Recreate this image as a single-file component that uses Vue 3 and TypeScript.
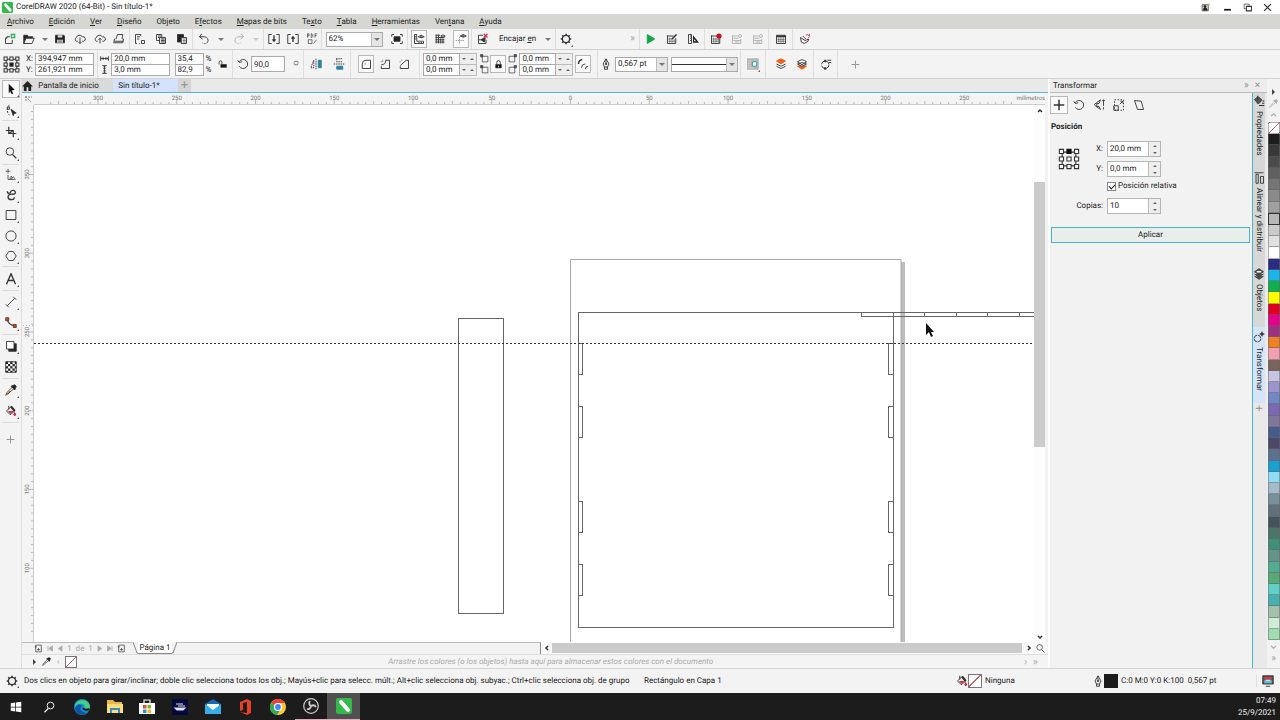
<script setup lang="ts">
import { ref } from 'vue'

interface Tool { name: string; icon: string; on?: boolean; flyout?: boolean; caret?: boolean; dim?: boolean }

const icons: Record<string, string> = {
  newDoc: '<path d="M8 5H4L2 7v7h9V9M4 5v2H2"/><path d="M9 1h6v6H9z" fill="#16a34a" stroke="none"/><path d="M12 2v4M10 4h4" stroke="#fff"/>',
  open: '<path d="M1 3h5l1 2h6v2H4l-3 7z" fill="#222"/><path d="M4 7h11l-3 7H1z" fill="#f3f3f3"/>',
  save: '<path d="M2 3h11l1 1v9H2z" fill="#222"/><path d="M5 3h6v3H5zM4 9h8v4H4z" fill="#ddd" stroke="none"/><path d="M5 10.500h6M5 12h6" stroke-width=".7"/>',
  cloudDown: '<path d="M5 11H3a3 3 0 0 1 0-5 4.500 4.500 0 0 1 8-1 3 3 0 0 1 2 6h-2M8 6v8M6 12l2 2 2-2"/>',
  cloudUp: '<path d="M5 11H3a3 3 0 0 1 0-5 4.500 4.500 0 0 1 8-1 3 3 0 0 1 2 6h-2M8 14V7M6 9l2-2 2 2"/>',
  print: '<path d="M4 8 6 2h7l-1 6M3 8h-1l-1 5h12l1-5h-1M2 11h12"/>',
  cut: '<path d="M2 14V2h7v2M4 5h4M2 14h2M4 8h3M10 10h4v4h-4zM7 14h1"/>',
  copy: '<path d="M2 2h7v8H2zM4 4h4M4 6h2"/><path d="M6 6h8v8H6z" fill="#e5e5e5"/><path d="M8 8h5M8 10h5M8 12h5"/>',
  paste: '<path d="M2 2h8v10H2z" fill="#222"/><path d="M7 6h7v8H7z" fill="#eee"/><path d="M9 8h4M9 10h4M9 12h4" stroke-width=".8"/>',
  undo: '<path d="M5 1 2 5l4 3M2 5h7a5 5 0 0 1 4 7"/><path d="M13 12q-3 4-7 1" stroke-dasharray="2 1.500"/>',
  redo: '<path d="m11 1 3 4-4 3M14 5H7a5 5 0 0 0-4 7"/><path d="M3 12q3 4 7 1" stroke-dasharray="2 1.500"/>',
  import: '<path d="M5 2H1v12h4M11 2h4v12h-4"/><path d="M8 3v8M6 8.500 8 11l2-2.500" stroke-width="1.800"/>',
  export: '<path d="M5 2H1v12h4M11 2h4v12h-4"/><path d="M8 12V5M6 7.500 8 5l2 2.500" stroke-width="1.800"/>',
  pdf: '<path d="M2 6V1h2v3H2M7 1v5h1l1-1V2L8 1H7M12 6V1h3M12 3.500h2M3 9v5h5V9zM10 14l4-5" stroke-width=".9"/>',
  full: '<path d="M4 5h8v6H4z" fill="#222"/><path d="M1 5V2h3M12 2h3v3M15 11v3h-3M4 14H1v-3"/>',
  rulers: '<path d="M2 2v12h12v-3H5V2zM2 5h2M2 8h2M8 12v2M11 12v2"/><path d="M7 5q4-4 8 0-4 3-8 0"/><circle cx="11" cy="5" r="1"/>',
  grid: '<path d="M2 3h6M2 6h12M2 9h12M2 12h12M3 2v12M6 2v12M9 7v7M12 7v7"/><path d="M9 4q3-3 6 0-3 3-6 0"/>',
  guides: '<path d="M1 10h12M6 5v10" stroke="#999" stroke-dasharray="2 1"/><path d="M7 4q4-4 8 0-4 3-8 0"/><circle cx="11" cy="4" r="1"/>',
  snapOff: '<path d="M8 3H2v11h10V9"/><path d="M11 6 5 9l5 3zM2 9h3" fill="#333"/><path d="m9 1 5 5M14 1 9 6" stroke="#dc2445" stroke-width="1.500"/>',
  gear: '<circle cx="8" cy="8" r="4.800" stroke-width="1.700"/><path d="M8 1v2.500M8 12.500V15M1 8h2.500M12.500 8H15M3 3l2 2M11 11l2 2M13 3l-2 2M3 13l2-2" stroke-width="2"/>',
  play: '<path d="m3 2 10 6-10 6z" fill="#16a34a" stroke="#16a34a"/>',
  script: '<path d="M2 4h8M2 3v11h11V7"/><path d="M5 6v7M8 7v6M11 8v5M3 8h5M3 11h9" stroke-width=".7"/><path d="m8 8 6-6" stroke-width="2.200"/>',
  ruler3: '<path d="M2 2h4v12H2zM4 4h2M4 7h2M4 10h2"/><path d="M8 3v10h8z" fill="#222" stroke="none"/><path d="M9.500 8v3h2.500z" fill="#fff" stroke="none"/>',
  record: '<path d="M2 4h8M2 3v11h11V7"/><path d="M5 6v7M8 7v6M11 8v5M3 8h10M3 11h10" stroke-width=".7"/><circle cx="12" cy="4" r="3.500" fill="#c11225" stroke="none"/>',
  sheet: '<path d="M2 4h7M2 3v11h11V8"/><path d="M3 7h7M3 10h10M5 12h6"/><circle cx="12" cy="4" r="2"/>',
  table: '<path d="M2 3h12v11H2z"/><path d="M2 4.500h12" stroke-width="2.500"/><path d="M5 6v7M8 6v7M11 6v7M3 8.500h10M3 11h10" stroke-width=".7"/>',
  launch: '<path d="M2 6 3 12l4 2 5-3 1-3-5 2-6-4zM5 4l4 4"/><path d="m9 3 3-1 2 3-2 2M14 1v3" stroke="#cc4058"/>',
  origin: '<path d="M3 3h10v10H3z"/><path d="M1 1h3v3H1zM6.500 1h3v3h-3zM12 1h3v3h-3zM1 6.500h3v3H1zM12 6.500h3v3h-3zM1 12h3v3H1zM6.500 12h3v3h-3zM12 12h3v3h-3z" fill="#fff"/><path d="M6.500 6.500h3v3h-3z" fill="#111"/>',
  originTop: '<path d="M3 3h10v10H3z"/><path d="M1 1h3v3H1zM12 1h3v3h-3zM1 6.500h3v3H1zM6.500 6.500h3v3h-3zM12 6.500h3v3h-3zM1 12h3v3H1zM6.500 12h3v3h-3zM12 12h3v3h-3z" fill="#fff"/><path d="M6.500 1h3v3h-3z" fill="#111" stroke="#111"/>',
  width: '<path d="M1 4v8M15 4v8M2 8h12M4 6 2 8l2 2M12 6l2 2-2 2M6 6v4M10 6v4" stroke-width="1.500"/>',
  height: '<path d="M4 1h8M4 15h8M8 2v12M6 4l2-2 2 2M6 12l2 2 2-2M6 6h4M6 10h4" stroke-width="1.500"/>',
  unlock: '<path d="M2 8V4a2 2 0 0 1 5 0v4" stroke-width="1.500"/><path d="M5 8h10v5H5z" fill="#111"/>',
  lock: '<path d="M5 8V4a3 3 0 0 1 6 0v4" stroke-width="1.500"/><path d="M3 8h10v6H3z" fill="#111"/><path d="M8 10v3" stroke="#fff"/>',
  rotate: '<path d="M3 5a6 6 0 1 1 0 6M1 3l2 3 4-1"/>',
  mirrorH: '<path d="M5 3v10H1zM8 1v14" stroke-dasharray="2 1"/><path d="M11 3h4v10h-4z" fill="#31809f" stroke="#31809f"/>',
  mirrorV: '<path d="M4 1h8M5 1v4h8M1 8h14" stroke-dasharray="2 1"/><path d="M5 11h8v4H5z" fill="#31809f" stroke="#31809f"/>',
  round: '<path d="M3 14V8q0-5 5-5h6v11z"/><path d="M6 8h2" stroke="#777"/>',
  scallop: '<path d="M3 11v3h11V3H9q0 6-6 6"/><path d="M2 5h3M5 2v3" stroke="#999"/>',
  chamfer: '<path d="M3 11v3h11V3h-3l-8 7"/><path d="M2 5h2M5 2v2" stroke="#999"/>',
  corners: '<path d="M4 4h10v10H4z"/><path d="M1 1h4v4H1z" fill="#555"/>',
  cornersR: '<path d="M2 4h10v10H2z"/><path d="M11 1h4v4h-4z" fill="#555"/>',
  relative: '<path d="M2 8q0-5 5-6" stroke-width="2"/><path d="M6 13q0-5 5-5M11 15q0-4 4-4"/>',
  pen: '<path d="m8 1 4 7-2 4H6L4 8zM8 2v7M6 12v3h4v-3"/><circle cx="8" cy="8" r="1"/>',
  wrap: '<path d="M0 1h15v14H0z" fill="#b5b5b5" stroke="#b5b5b5"/><path d="M1 4h5M1 7h4M1 10h4M1 13h8" stroke="#d5d5d5"/><rect x="7" y="5" width="6" height="6" rx="2" fill="#fff" stroke="#37a5a5" stroke-width="1.500"/>',
  front: '<path d="m2 11 6 3 6-3M2 8l6 3 6-3" fill="#fff"/><path d="m2 4 6-3 6 3-6 4z" fill="#e66322" stroke="#e66322"/>',
  back: '<path d="m2 11 6 4 6-4-6-2z" fill="#e66322" stroke="#e66322"/><path d="m2 8 6 3 6-3-6-2zM2 5l6-3 6 3-6 4z" fill="#fff"/>',
  convert: '<circle cx="7" cy="9" r="5" stroke-dasharray="6 2"/><path d="M10 3h5M12 6h3"/><path d="M6 3h2v2H6zM6 13h2v2H6z" fill="#333"/>',
  plus: '<path d="M8 1v14M1 8h14" stroke="#999" stroke-width="1.800"/>',
  pick: '<path d="m5 1 8 8-4 1 2 4-2 1-2-4-2 3z" fill="#111" stroke="none"/>',
  shape: '<path d="M6 1Q0 8 6 15" stroke-dasharray="3 1.500"/><path d="M3 4h3v3H3z"/><path d="m8 7 7 5-3 .5-1 3z" fill="#222"/>',
  crop: '<path d="M5 1v9h10M1 6h10v9M5 10l6-4" stroke-width="1.600"/>',
  zoom: '<circle cx="6.500" cy="6" r="5"/><path d="m10 10 5 5" stroke-width="1.500"/>',
  freehand: '<path d="M4 0v6M1 3h6" stroke-dasharray="2 .5"/><path d="M4 8v6h10M7 14v-3q2-3 2 0v2q2-5 4 0" stroke-width="1"/>',
  artistic: '<path d="M3 3q0 4 4 2 1-4 5-3 4 3 0 5-8-1-8 4 1 4 6 3 3-1 2-3" stroke-width="1.700"/>',
  rect: '<path d="M1.500 2h13v12h-13z"/>',
  ellipse: '<circle cx="8" cy="8" r="6.800"/>',
  polygon: '<path d="m5 2-4 6 4 6h6l4-6-4-6z"/>',
  text: '<path d="M2 15 8 1l6 14M4 10h8" stroke-width="1.800"/>',
  dimension: '<path d="M3 13 13 3M1 11l4 4M11 1l4 4"/>',
  connector: '<path d="M3 3q1 7 10 9" stroke-width="1.500"/><path d="M1 1h4v4H1zM11 10h4v4h-4z" fill="#b9502d" stroke="#683624"/>',
  shadow: '<path d="M5 5h10v10H5z" fill="#222"/><path d="M2 2h10v10H2z" fill="#fff"/>',
  checker: '<path d="M1 1h14v14H1z" fill="#fff"/><path d="M1 1h3v3H1zM7 1h3v3H7zM4 4h3v3H4zM10 4h3v3h-3zM1 7h3v3H1zM7 7h3v3H7zM4 10h3v3H4zM10 10h3v3h-3zM1 13h3v2H1zM7 13h3v2H7zM13 1h2v3h-2zM13 7h2v3h-2zM13 13h2v2h-2z" fill="#222" stroke="none"/>',
  dropper: '<path d="m1 15 2-4 7-7 2 2-8 7z" fill="#fff"/><path d="m8 3 5 5 2-5-2-2z" fill="#222"/><path d="m2 14 5-5" stroke="#b37841"/>',
  fill: '<path d="m2 8 6-6 5 6-6 5zM5 1v5" fill="#eee"/><path d="M4 8h8l-5 4z" fill="#cf3447" stroke="none"/><path d="m13 9 2 4-2 2-2-2z" fill="#c52038" stroke="none"/><path d="m8 2 5 6" stroke-width="3"/>',
  move: '<path d="M8 1v14M1 8h14" stroke-width="2"/>',
  scaleMirror: '<path d="M10 1 2 7l1 2 7 5M10 1 8 6H5v4h3l2 4M14 1v8M12 3l2-2 2 2M14 11v3"/>',
  size: '<path d="M2 1h12v14H2z" stroke-dasharray="2 2"/><path d="M1 9h6v6H1zM9 7l4-4M10 3h3v3"/>',
  skew: '<path d="m2 2 9 1 3 11H6z"/>',
  layers: '<path d="m2 5 6-4 6 4-6 4zM2 8l6 4 6-4M2 11l6 4 6-4" fill="#555"/><path d="M5 5h6" stroke="#fff" stroke-width="2"/>',
  props: '<path d="m2 6 5-4 5 5-5 5zM6 1v5" fill="#555"/><path d="M8 14h7M12 11h3M13 8h2" stroke-width="1.500"/>',
  align: '<path d="M2 1h12M4 3h3v12H4zM10 6h4v9h-4z"/>',
  trans: '<circle cx="6" cy="10" r="4.500" stroke-dasharray="6 1"/><path d="M12 1v6M9 4h6" stroke-width="2"/>',
  page: '<path d="M3 2h10v12H3zM5 10h6M8 7v5M1 5h4"/>',
  user: '<path d="M2 3h11v11H2z" fill="#ddd"/><circle cx="7" cy="6" r="2" fill="#222"/><path d="M4 13q0-5 3.500-5T11 13z" fill="#222"/><circle cx="13" cy="3" r="2" stroke="#dd9d62"/>',
  mini: '<path d="M2 12h12" stroke="#111" stroke-width="3"/>',
  restore: '<path d="M2 2h9v8H2z"/><path d="M6 6h9v8H6z" fill="#fff" stroke-width="1.800"/>',
  close: '<path d="m2 2 12 12M14 2 2 14" stroke-width="2.200"/>',
  monitor: '<path d="M1 1h14v11H1zM5 15h6" fill="#555"/><path d="M3 3h10v3H3z" fill="#d93b45" stroke="none"/><path d="M3 7h10v4H3z" fill="#57c5d8" stroke="none"/><path d="M5 7h6" stroke="#fff"/>',
  corel: '<rect x="0" y="0" width="16" height="16" rx="2" fill="#35b94a" stroke="none"/><path d="m5 4 7 8" stroke="#fff" stroke-width="4" stroke-linecap="round"/>',
  windows: '<path d="m1 3 6-1v5.500H1zM8 2l7-1v6.500H8zM1 8.500h6V14l-6-1zM8 8.500h7V15l-7-1z" fill="#fff" stroke="none"/>',
  search: '<circle cx="10" cy="6" r="4.500" stroke="#fff"/><path d="m7 10-5 5" stroke="#fff" stroke-width="1.500"/>',
  edge: '<circle cx="8" cy="8" r="8" fill="#168bd2" stroke="none"/><path d="M1 7C2 0 14-1 16 7c0 5-6 4-6 2 2-2-1-5-5-4-2 0-4 2-4 4z" fill="#45cf83" stroke="none"/><path d="M1 9q4-6 7-2-5 5 5 7-7 4-11-1z" fill="#0c559f" stroke="none"/><path d="M9 9q2 3 6 1" stroke="#1c1c1c" stroke-width="2"/>',
  explorer: '<path d="M0 1h6l2 2h7v11H0z" fill="#eab747" stroke="none"/><path d="M0 5h16v9H0z" fill="#ffdc79" stroke="none"/><path d="M3 9h10v5h-2v-3H5v3H3z" fill="#3b89c9" stroke="none"/>',
  store: '<path d="M5 4V1h6v3" stroke="#fff"/><path d="M0 4h16v11H0z" fill="#fff" stroke="none"/><path d="M4 6h3.500v3.500H4z" fill="#ed4e31" stroke="none"/><path d="M8.500 6H12v3.500H8.500z" fill="#78b82a" stroke="none"/><path d="M4 10.500h3.500V14H4z" fill="#2598e2" stroke="none"/><path d="M8.500 10.500H12V14H8.500z" fill="#f4bb18" stroke="none"/>',
  boat: '<path d="M0 0h16v16H0z" fill="#06083d" stroke="none"/><path d="M3 9h10l-2 2H5zM4 5h7M6 7h7" stroke="#e0e2f3" fill="#e0e2f3"/>',
  mail: '<path d="M0 5 8 0l8 5v10H0z" fill="#1669b2" stroke="none"/><path d="M2 5h12v6H2z" fill="#f2faff" stroke="none"/><path d="m0 5 8 6 8-6v10H0z" fill="#36aee9" stroke="none"/>',
  office: '<path d="m3 3 7-3 4 2v12l-4 2-7-3 7 1V3L6 4v7l-3 1z" fill="#e54122" stroke="none"/>',
  chrome: '<circle cx="8" cy="8" r="8" fill="#fcc934" stroke="none"/><path d="M8 8 1 4a8 8 0 0 1 14 0H8z" fill="#ea4335" stroke="none"/><path d="M1 4a8 8 0 0 0 6 12l4-6-3-2z" fill="#34a853" stroke="none"/><circle cx="8" cy="8" r="3.500" fill="#4285f4" stroke="#fff"/>',
  obs: '<circle cx="8" cy="8" r="7.300" fill="#222" stroke="#ccc"/><path d="M7 3q-2 3 1 5 3-2 5 1M8 8q-1 4-4 3" stroke="#ccc" stroke-width="1.800"/>',
}

const fileGroups: Tool[][] = [
  [{ name: 'Nuevo', icon: 'newDoc' }, { name: 'Abrir', icon: 'open', caret: true }, { name: 'Guardar', icon: 'save' }, { name: 'Descargar', icon: 'cloudDown' }, { name: 'Cargar', icon: 'cloudUp' }, { name: 'Imprimir', icon: 'print' }],
  [{ name: 'Cortar', icon: 'cut' }, { name: 'Copiar', icon: 'copy' }, { name: 'Pegar', icon: 'paste' }],
  [{ name: 'Deshacer', icon: 'undo', caret: true }, { name: 'Rehacer', icon: 'redo', caret: true, dim: true }],
  [{ name: 'Importar', icon: 'import' }, { name: 'Exportar', icon: 'export' }, { name: 'Publicar PDF', icon: 'pdf' }],
]
const viewTools: Tool[] = [{ name: 'Reglas', icon: 'rulers', on: true }, { name: 'Cuadrícula', icon: 'grid' }, { name: 'Guías', icon: 'guides', on: true }]
const macroGroups: Tool[][] = [
  [{ name: 'Ejecutar', icon: 'play' }, { name: 'Editar script', icon: 'script' }, { name: 'Medidas', icon: 'ruler3' }],
  [{ name: 'Grabar', icon: 'record' }, { name: 'Pausar', icon: 'sheet', dim: true }, { name: 'Detener', icon: 'sheet', dim: true }],
  [{ name: 'Tabla', icon: 'table' }],
  [{ name: 'Iniciador', icon: 'launch' }],
]
const toolbox: Tool[][] = [
  [{ name: 'Selección', icon: 'pick', on: true, flyout: true }, { name: 'Forma', icon: 'shape', flyout: true }],
  [{ name: 'Recortar', icon: 'crop', flyout: true }, { name: 'Zoom', icon: 'zoom', flyout: true }],
  [{ name: 'Mano alzada', icon: 'freehand', flyout: true }, { name: 'Medios artísticos', icon: 'artistic', flyout: true }, { name: 'Rectángulo', icon: 'rect', flyout: true }, { name: 'Elipse', icon: 'ellipse', flyout: true }, { name: 'Polígono', icon: 'polygon', flyout: true }],
  [{ name: 'Texto', icon: 'text', flyout: true }],
  [{ name: 'Dimensión', icon: 'dimension', flyout: true }, { name: 'Conector', icon: 'connector', flyout: true }],
  [{ name: 'Sombra', icon: 'shadow', flyout: true }, { name: 'Transparencia', icon: 'checker' }],
  [{ name: 'Cuentagotas', icon: 'dropper', flyout: true }, { name: 'Relleno', icon: 'fill', flyout: true }],
  [{ name: 'Personalizar', icon: 'plus' }],
]
const transforms: Tool[] = [{ name: 'Posición', icon: 'move', on: true }, { name: 'Girar', icon: 'rotate' }, { name: 'Escala', icon: 'scaleMirror' }, { name: 'Tamaño', icon: 'size' }, { name: 'Inclinar', icon: 'skew' }]
const dockTabs = [
  { text: 'Propiedades', icon: 'props', cls: 'tab-a' }, { text: 'Alinear y distribuir', icon: 'align', cls: 'tab-b' },
  { text: 'Objetos', icon: 'layers', cls: 'tab-c' }, { text: 'Transformar', icon: 'trans', cls: 'tab-d' },
]
const apps: Tool[] = ['windows', 'search', 'edge', 'explorer', 'store', 'boat', 'mail', 'office', 'chrome', 'obs', 'corel'].map(n => ({ name: n, icon: n }))
const menus: [string, string, string][] = [['', 'A', 'rchivo'], ['', 'E', 'dición'], ['', 'V', 'er'], ['', 'D', 'iseño'], ['Ob', 'j', 'eto'], ['E', 'f', 'ectos'], ['', 'M', 'apas de bits'], ['Te', 'x', 'to'], ['', 'T', 'abla'], ['', 'H', 'erramientas'], ['Ven', 't', 'ana'], ['', 'A', 'yuda']]
const swatches = ['#1c1c1c', '#383838', '#4b4b4b', '#606060', '#757575', '#8a8a8a', '#a0a0a0', '#b6b6b6', '#cacaca', '#e0e0e0', '#ffffff', '#2b2c83', '#1bb4e8', '#10b050', '#ffff00', '#e00024', '#e6008c', '#9c3280', '#ee8024', '#f0a0b0', '#78645c', '#c8c4e4', '#9c94cc', '#7088c4', '#7c68b0', '#80789c', '#485c8c', '#4c4868', '#5c7090', '#18a0d0', '#90dcf4', '#a4bcc8', '#78909c', '#60707c', '#44545c', '#4c7468', '#409078', '#649488', '#54ac90', '#58a878', '#60d0c8', '#48b0b0', '#a4c0ac', '#d0ecd8', '#a0dcb0']

const step = 7.875
const hTicks = Array.from({ length: 123 }, (_, i) => i - 66).map(n => ({ at: 536.5 + n * step, n }))
const vTicks = Array.from({ length: 67 }, (_, i) => i - 28).map(n => ({ at: 227 + n * step, n }))
const slots = [343.5, 406.5, 501.5, 564.5]
const cells = [893.5, 924.5, 956.5, 987.5, 1019.5]

const x = ref('394,947 mm')
const y = ref('261,921 mm')
const relative = ref(true)
</script>

<template>
  <div class="app">
    <header class="title">
      <svg class="ic logo" viewBox="0 0 16 16" v-html="icons.corel" />
      <span class="grow">CorelDRAW 2020 (64-Bit) - Sin título-1*</span>
      <button v-for="w in ['user', 'mini', 'restore', 'close']" :key="w" :aria-label="w"><svg class="ic small" viewBox="0 0 16 16" v-html="icons[w]" /></button>
    </header>
    <nav class="menu">
      <button v-for="m in menus" :key="m.join('')">{{ m[0] }}<u>{{ m[1] }}</u>{{ m[2] }}</button>
    </nav>

    <div class="bar standard">
      <div v-for="(g, i) in fileGroups" :key="i" class="group">
        <template v-for="t in g" :key="t.name">
          <button :aria-label="t.name" :class="{ dim: t.dim }"><svg class="ic" viewBox="0 0 16 16" v-html="icons[t.icon]" /></button>
          <i v-if="t.caret" class="caret" :class="{ dim: t.dim }" />
        </template>
      </div>
      <div class="group">
        <label class="combo zoomlevel"><select aria-label="Nivel de zoom"><option>62%</option></select><span><i class="caret" /></span></label>
        <button aria-label="Pantalla completa"><svg class="ic" viewBox="0 0 16 16" v-html="icons.full" /></button>
      </div>
      <div class="group">
        <button v-for="t in viewTools" :key="t.name" :aria-label="t.name" :class="{ on: t.on }"><svg class="ic" viewBox="0 0 16 16" v-html="icons[t.icon]" /></button>
      </div>
      <div class="group">
        <button aria-label="Desactivar encaje"><svg class="ic" viewBox="0 0 16 16" v-html="icons.snapOff" /></button>
        <button>Encajar&nbsp;<u>e</u>n</button><i class="caret" />
      </div>
      <div class="group options">
        <button class="flyout" aria-label="Opciones"><svg class="ic" viewBox="0 0 16 16" v-html="icons.gear" /></button>
        <span class="more">»</span>
      </div>
      <div v-for="(g, i) in macroGroups" :key="'m' + i" class="group">
        <button v-for="t in g" :key="t.name" :aria-label="t.name" :class="{ dim: t.dim }"><svg class="ic" viewBox="0 0 16 16" v-html="icons[t.icon]" /></button>
      </div>
    </div>

    <div class="bar property">
      <div class="group">
        <svg class="ic big" viewBox="0 0 16 16" v-html="icons.origin" />
        <div class="pair place">
          <label>X: <input v-model="x"></label>
          <label>Y: <input v-model="y"></label>
        </div>
      </div>
      <div class="group">
        <div class="pair dims">
          <label><svg class="ic small" viewBox="0 0 16 16" v-html="icons.width" /><input aria-label="Ancho" value="20,0 mm"></label>
          <label><svg class="ic small" viewBox="0 0 16 16" v-html="icons.height" /><input aria-label="Alto" value="3,0 mm"></label>
        </div>
        <div class="pair scale">
          <label><input value="35,4"> %</label>
          <label><input value="82,9"> %</label>
        </div>
        <button aria-label="Bloquear proporción"><svg class="ic small" viewBox="0 0 16 16" v-html="icons.unlock" /></button>
      </div>
      <div class="group">
        <label class="angle"><svg class="ic" viewBox="0 0 16 16" v-html="icons.rotate" /><input aria-label="Ángulo" value="90,0"></label><span class="degree">○</span>
      </div>
      <div class="group">
        <button v-for="n in ['mirrorH', 'mirrorV']" :key="n" :aria-label="n"><svg class="ic" viewBox="0 0 16 16" v-html="icons[n]" /></button>
      </div>
      <div class="group corner-styles">
        <button v-for="n in ['round', 'scallop', 'chamfer']" :key="n" :aria-label="n" :class="{ on: n === 'round' }"><svg class="ic" viewBox="0 0 16 16" v-html="icons[n]" /></button>
      </div>
      <div class="group radius">
        <div class="pair spins">
          <label v-for="k in 2" :key="k"><input :aria-label="'Radio ' + k" value="0,0 mm"><span><i class="tiny" /><i class="tiny up" /></span></label>
        </div>
        <div class="stack"><svg v-for="k in 2" :key="k" class="ic small" viewBox="0 0 16 16" v-html="icons.corners" /></div>
        <button class="on" aria-label="Editar esquinas juntas"><svg class="ic small" viewBox="0 0 16 16" v-html="icons.lock" /></button>
        <div class="stack"><svg v-for="k in 2" :key="k" class="ic small" viewBox="0 0 16 16" v-html="icons.cornersR" /></div>
        <div class="pair spins">
          <label v-for="k in 2" :key="k"><input :aria-label="'Radio derecho ' + k" value="0,0 mm"><span><i class="tiny" /><i class="tiny up" /></span></label>
        </div>
        <button class="on" aria-label="Escala relativa de esquina"><svg class="ic" viewBox="0 0 16 16" v-html="icons.relative" /></button>
      </div>
      <div class="group">
        <svg class="ic" viewBox="0 0 16 16" v-html="icons.pen" />
        <label class="combo stroke"><select aria-label="Anchura de contorno"><option>0,567 pt</option></select><span><i class="caret" /></span></label>
        <button class="combo linestyle" aria-label="Estilo de línea"><b /><span><i class="caret" /></span></button>
      </div>
      <div class="group"><button class="flyout" aria-label="Ajustar texto"><svg class="ic" viewBox="0 0 16 16" v-html="icons.wrap" /></button></div>
      <div class="group order"><button v-for="n in ['front', 'back']" :key="n" :aria-label="n"><svg class="ic" viewBox="0 0 16 16" v-html="icons[n]" /></button></div>
      <div class="group"><button aria-label="Convertir a curvas"><svg class="ic" viewBox="0 0 16 16" v-html="icons.convert" /></button></div>
      <div class="group"><button aria-label="Añadir"><svg class="ic small" viewBox="0 0 16 16" v-html="icons.plus" /></button></div>
    </div>

    <main class="work">
      <aside class="toolbox">
        <div v-for="(g, i) in toolbox" :key="i" class="tools">
          <button v-for="t in g" :key="t.name" :aria-label="t.name" :class="{ on: t.on, flyout: t.flyout }"><svg class="ic" viewBox="0 0 16 16" v-html="icons[t.icon]" /></button>
        </div>
      </aside>

      <section class="document">
        <div class="tabs">
          <button class="home"><svg viewBox="0 0 12 11"><path d="M0 6 6 0l6 6h-2v5H7V7H5v4H2V6z" fill="#222" /></svg>Pantalla de inicio</button>
          <button class="current">Sin título-1*</button>
          <button class="add" aria-label="Nueva pestaña">+</button>
        </div>
        <div class="view">
          <div class="corner"><svg viewBox="0 0 12 12"><path d="M4 3v6M3 4h7M4 4l5 5" stroke="#888" fill="none" stroke-dasharray="2 1" /></svg></div>
          <svg class="hruler">
            <g v-for="t in hTicks" :key="t.n">
              <line :x1="t.at" :x2="t.at" :y1="t.n % 10 === 0 ? 7 : t.n % 5 === 0 ? 8 : 9" y2="11" />
              <text v-if="t.n % 10 === 0" :x="t.at" y="7">{{ Math.abs(t.n * 5) }}</text>
            </g>
            <text class="unit" x="100%" y="7">milímetros</text>
          </svg>
          <svg class="vruler">
            <g v-for="t in vTicks" :key="t.n">
              <line :x1="t.n % 10 === 0 ? 7 : 9" x2="11" :y1="t.at" :y2="t.at" />
              <text v-if="t.n % 10 === 0" :transform="`translate(7 ${t.at}) rotate(-90)`">{{ 250 - t.n * 5 }}</text>
            </g>
            <path d="M1 220.500h10" stroke-dasharray="1 2" />
          </svg>
          <svg class="canvas">
            <g transform="translate(-34 -105)">
              <path d="M901 262h4v500h-4z" fill="#bdbdbd" />
              <path d="M570.500 760V259.500h330.500V760" class="pageline" />
              <rect x="458.500" y="318.500" width="45" height="295" />
              <rect x="578.500" y="312.500" width="315" height="315" />
              <g v-for="s in slots" :key="s"><rect x="578.500" :y="s" width="4" height="31" /><rect x="888.500" :y="s" width="5" height="31" /></g>
              <path d="M893 312.500h600M861.500 316.500h700M861.500 312v5" />
              <path v-for="c in cells" :key="c" :d="`M${c} 312v5`" />
              <path d="M34 343.500h998" class="guide" />
              <path d="M926 323v12l3-3 2 5 2-1-2-4h3z" class="cursor" />
            </g>
          </svg>
          <div class="vscroll">
            <button aria-label="Subir"><svg viewBox="0 0 10 10"><path d="m3 6 2-2 2 2" /></svg></button>
            <div class="track"><b /></div>
            <button aria-label="Bajar"><svg viewBox="0 0 10 10"><path d="m3 4 2 2 2-2" /></svg></button>
          </div>
        </div>
        <div class="pages">
          <div class="nav">
            <svg class="ic small" viewBox="0 0 16 16" v-html="icons.page" />
            <svg class="steps" viewBox="0 0 18 8"><path d="M1 1v6M6 1v6L2 4zM17 1v6l-4-3z" /></svg>
            <span>1 &nbsp;de &nbsp;1</span>
            <svg class="steps" viewBox="0 0 18 8"><path d="M17 1v6M12 1v6l4-3zM1 1v6l4-3z" /></svg>
            <svg class="ic small" viewBox="0 0 16 16" v-html="icons.page" />
          </div>
          <svg class="slant" viewBox="0 0 6 12"><path d="m1 0 4 11h1" /></svg>
          <button class="pagetab">Página 1</button>
          <svg class="slant" viewBox="0 0 6 12"><path d="M5 0 1 11H0" /></svg>
          <div class="rest" />
          <div class="hscroll">
            <button aria-label="Izquierda"><svg viewBox="0 0 10 10"><path d="M6 3 4 5l2 2" /></svg></button>
            <b />
            <button aria-label="Derecha"><svg viewBox="0 0 10 10"><path d="m4 3 2 2-2 2" /></svg></button>
            <button aria-label="Navegador"><svg class="ic small" viewBox="0 0 16 16" v-html="icons.zoom" /></button>
          </div>
        </div>
        <div class="docpalette">
          <i class="handle" /><i class="right" />
          <svg class="ic small" viewBox="0 0 16 16" v-html="icons.dropper" />
          <span>‹</span>
          <button class="none" aria-label="Sin color" />
          <em>Arrastre los colores (o los objetos) hasta aquí para almacenar estos colores con el documento</em>
          <span class="ends">› &nbsp;»</span>
        </div>
      </section>

      <aside class="dock">
        <div class="dockhead"><h2>Transformar</h2><span>»</span><button aria-label="Cerrar">×</button></div>
        <div class="dockbody">
          <div class="panel">
            <div class="modes"><button v-for="t in transforms" :key="t.name" :aria-label="t.name" :class="{ on: t.on }"><svg class="ic" viewBox="0 0 16 16" v-html="icons[t.icon]" /></button></div>
            <h3>Posición</h3>
            <div class="form">
              <svg class="anchor" viewBox="0 0 16 16" v-html="icons.originTop" />
              <label for="px">X:</label><div class="spin"><input id="px" value="20,0 mm"><span><i class="tiny up" /><i class="tiny" /></span></div>
              <label for="py">Y:</label><div class="spin"><input id="py" value="0,0 mm"><span><i class="tiny up" /><i class="tiny" /></span></div>
              <label class="check"><input v-model="relative" type="checkbox">Posición relativa</label>
              <label for="pc" class="copies">Copias:</label><div class="spin last"><input id="pc" value="10"><span><i class="tiny up" /><i class="tiny" /></span></div>
            </div>
            <button class="apply">Aplicar</button>
          </div>
          <div class="docktabs">
            <button v-for="t in dockTabs" :key="t.text" :class="t.cls"><svg class="ic" viewBox="0 0 16 16" v-html="icons[t.icon]" />{{ t.text }}</button>
            <button class="plus" aria-label="Añadir ventana">+</button>
          </div>
        </div>
      </aside>

      <aside class="palette">
        <i class="handle wide" /><i class="right" />
        <svg class="ic small dim" viewBox="0 0 16 16" v-html="icons.dropper" />
        <svg class="chev" viewBox="0 0 10 10"><path d="m1 7 4-4 4 4" /></svg>
        <div class="colors">
          <button class="none" aria-label="Sin color" />
          <button v-for="(c, i) in swatches" :key="c" :aria-label="c" :class="{ picked: i === 7 }" :style="{ background: c }" />
        </div>
        <svg class="chev" viewBox="0 0 10 10"><path d="m1 3 4 4 4-4" /></svg>
        <span>»</span>
      </aside>
    </main>

    <footer class="status">
      <button class="flyout" aria-label="Opciones de estado"><svg class="ic" viewBox="0 0 16 16" v-html="icons.gear" /></button>
      <span class="hint">Dos clics en objeto para girar/inclinar; doble clic selecciona todos los obj.; Mayús+clic para selecc. múlt.; Alt+clic selecciona obj. subyac.; Ctrl+clic selecciona obj. de grupo</span>
      <span class="object">Rectángulo en Capa 1</span>
      <span class="filled"><svg class="ic" viewBox="0 0 16 16" v-html="icons.fill" /><i class="none box" />Ninguna</span>
      <span class="outline"><svg class="ic" viewBox="0 0 16 16" v-html="icons.pen" /><i class="box black" />C:0 M:0 Y:0 K:100 &nbsp;0,567 pt</span>
      <span class="proof"><svg class="ic" viewBox="0 0 16 16" v-html="icons.monitor" /></span>
    </footer>
    <div class="taskbar">
      <div class="apps"><button v-for="a in apps" :key="a.name" :aria-label="a.name" :class="a.name"><svg class="ic" viewBox="0 0 16 16" v-html="icons[a.icon]" /></button></div>
      <time>07:49<br>25/9/2021</time>
    </div>
  </div>
</template>

<style>
body { margin: 0; background: #f2f2f2; }
</style>

<style scoped>
* { box-sizing: border-box; }
.app { display: flex; flex-direction: column; height: 100vh; min-height: 600px; overflow: hidden; font: 8px/10px Roboto, "Open Sans", sans-serif; text-rendering: geometricPrecision; color: #222; background: #f2f2f2; }
button, input, select { font: inherit; color: inherit; text-rendering: inherit; padding: 0; border: 0; border-radius: 0; background: none; margin: 0; }
button { display: flex; align-items: center; justify-content: center; white-space: nowrap; flex: none; }
u { text-underline-offset: 1px; }
svg { flex: none; display: block; }
.ic { width: 12px; height: 12px; fill: none; stroke: #333; stroke-width: 1.2; }
.ic.small { width: 9px; height: 9px; }
.ic.big { width: 17px; height: 17px; stroke-width: 1; }
.dim { opacity: .35; }
.caret { width: 0; height: 0; border: 3px solid transparent; border-top-color: #777; border-bottom: 0; flex: none; }
.tiny { width: 0; height: 0; border: 2px solid transparent; border-top-color: #666; border-bottom: 0; flex: none; }
.tiny.up { transform: rotate(180deg); }
.on { background: #fafafa; outline: 1px solid #b8b8b8; }
.flyout { position: relative; }
.flyout::after { content: ""; position: absolute; right: 0; bottom: 0; border: 1px solid transparent; border-right-color: #555; border-bottom-color: #555; }
.none { background: linear-gradient(to bottom right, #fff 45%, #c4566a 46%, #c4566a 53%, #fff 54%); border: 1px solid #777; }

.title { display: flex; align-items: center; height: 14px; padding: 0 3px 0 2px; background: #fff; flex: none; }
.logo { width: 11px; height: 11px; margin-right: 3px; }
.grow { flex: 1; }
.title button { width: 20px; height: 12px; }
.title button:nth-last-child(4) { width: 24px; }
.menu { display: flex; align-items: center; gap: 15px; height: 15px; padding-left: 7px; background: #d6d7d2; flex: none; }

.bar { display: grid; border-bottom: 1px solid #d2d2d2; background: #f3f3f3; flex: none; }
.group { display: flex; align-items: center; justify-content: space-around; border-right: 1px solid #ddd; height: 100%; min-width: 0; }
.group:last-child { border-right: 0; }
.group button { min-width: 14px; height: 16px; }
.standard { height: 21px; grid-template-columns: 130px 63px 71px 58px 86px 64px 84px 84px 65px 64px 24px 24px; }
.options { justify-content: space-between; padding: 0 4px 0 3px; }
.more { color: #999; font-size: 10px; }
.combo { display: flex; height: 15px; border: 1px solid #aaa; background: #fff; }
.combo select { appearance: none; flex: 1; min-width: 0; padding-left: 2px; outline: 0; }
.combo span { display: flex; align-items: center; justify-content: center; width: 11px; height: 100%; background: #e4e4e4; border-left: 1px solid #bbb; }
.zoomlevel { width: 57px; }
.property { height: 29px; grid-template-columns: 98px 135px 71px 47px 69px 178px 143px 25px 48px 24px 34px; }
.order { padding: 0 1px 0 4px; }
.corner-styles { padding: 0 6px 0 5px; }
.pair { display: flex; flex-direction: column; }
.pair label { display: flex; align-items: center; gap: 2px; }
.pair label + label { margin-top: -1px; }
.pair input, .angle input { height: 12px; border: 1px solid #aaa; background: #fff; padding-left: 2px; }
.place input { width: 59px; }
.place label { justify-content: space-between; }
.dims input { width: 59px; }
.scale input { width: 29px; }
.angle { display: flex; align-items: center; gap: 2px; }
.angle input { width: 34px; height: 16px; }
.degree { font-size: 10px; }
.radius { justify-content: space-between; padding: 0 7px 0 3px; }
.spins label { gap: 0; }
.spins input { width: 37px; }
.spins span { display: flex; align-items: center; justify-content: space-around; width: 17px; height: 12px; border: 1px solid #bbb; border-left: 0; background: #eee; }
.stack { display: flex; flex-direction: column; gap: 2px; }
.stroke { width: 53px; }
.group .linestyle { width: 67px; height: 15px; }
.linestyle b { flex: 1; height: 1px; background: #333; }

.work { display: flex; flex: 1; min-height: 0; }
.toolbox { width: 22px; border-right: 1px solid #dedede; background: #f3f3f3; flex: none; display: grid; align-content: start; grid-template-rows: 42px 44px 102px 24px 44px 44px 44px 32px; }
.tools { display: flex; flex-direction: column; justify-content: space-around; align-items: center; border-bottom: 1px solid #dcdcdc; margin: 0 2px; }
.tools:last-child { border: 0; }
.tools button { width: 16px; height: 16px; }
.tools:last-child .ic { width: 9px; height: 9px; }

.document { flex: 1; min-width: 0; display: flex; flex-direction: column; }
.tabs { display: flex; height: 14px; background: #e9e9ea; border-bottom: 1px solid #55b8cc; flex: none; }
.tabs button { height: 13px; }
.home { width: 91px; gap: 5px; padding-right: 14px; background: #dadada; }
.home svg { width: 11px; height: 10px; }
.tabs .current { width: 65px; padding-right: 13px; background: #d5e2fb; }
.tabs .add { width: 13px; font-size: 13px; background: #d5d5d5; color: #999; }
.view { flex: 1; min-height: 0; display: grid; grid-template-columns: 12px minmax(0, 1fr) 11px; grid-template-rows: 12px minmax(0, 1fr); margin-right: 3px; }
.corner { background: #f4f4f4; }
.hruler { width: 100%; height: 12px; grid-column: 2 / 4; background: #f4f4f4; border-bottom: 1px solid #ccc; }
.vruler { width: 12px; height: 100%; background: #f4f4f4; border-right: 1px solid #ccc; }
.hruler line, .vruler line, .vruler path { stroke: #bbb; stroke-width: 1; }
.hruler text, .vruler text { font-size: 6px; fill: #777; text-anchor: middle; }
.hruler .unit { text-anchor: end; }
.canvas { width: 100%; height: 100%; background: #fff; }
.canvas path, .canvas rect { stroke: #666; stroke-width: 1; fill: none; }
.canvas path:first-child { fill: #bdbdbd; stroke: none; }
.canvas .pageline { stroke: #aaa; }
.canvas .guide { stroke: #333; stroke-dasharray: 2 2; }
.canvas .cursor { fill: #111; stroke: none; }
.vscroll { display: flex; flex-direction: column; background: #fdfdfd; }
.vscroll button, .hscroll button { width: 11px; height: 11px; }
.vscroll svg, .hscroll button > svg:not(.ic) { width: 10px; height: 10px; fill: none; stroke: #333; stroke-width: 1.5; }
.track { flex: 1; display: grid; grid-template-rows: 66fr 265fr 184fr; }
.track b { grid-row: 2; background: #cbcbcb; }
.pages { display: flex; height: 12px; align-items: center; background: #f2f2f2; flex: none; padding-right: 2px; }
.nav { display: flex; align-items: center; justify-content: space-between; width: 110px; height: 12px; padding: 0 6px 0 12px; border-top: 1px solid #bbb; color: #aaa; }
.steps { width: 18px; height: 7px; fill: #aaa; stroke: #aaa; }
.slant { width: 6px; height: 12px; fill: none; stroke: #888; }
.pagetab { width: 34px; height: 12px; background: #fff; border-bottom: 1px solid #888; }
.rest { flex: 362; border-top: 1px solid #bbb; border-right: 1px solid #888; height: 12px; }
.hscroll { display: flex; align-items: center; flex: 505; height: 12px; background: #fafafa; }
.hscroll b { flex: 1; height: 10px; background: #cbcbcb; }
.hscroll button:nth-of-type(2) { width: 13px; }
.docpalette { display: flex; align-items: center; gap: 6px; height: 14px; padding: 0 10px 0 2px; border-top: 1px solid #ddd; background: #f4f4f4; color: #aaa; flex: none; }
.docpalette .none { width: 12px; height: 12px; }
.docpalette em { flex: 1; text-align: center; }
.ends { font-size: 11px; }
.handle { width: 3px; height: 10px; background: radial-gradient(#bbb 35%, transparent 40%) 0 0 / 2px 2px; }
.handle.wide { width: 10px; height: 4px; }
.right { border: 3px solid transparent; border-left-color: #444; border-right: 0; }

.dock { width: 219px; display: flex; flex-direction: column; border-left: 2px solid #fff; flex: none; }
.dockhead { display: flex; align-items: center; height: 14px; padding: 0 7px 0 3px; gap: 6px; border-bottom: 1px solid #bbb; background: #ececec; color: #888; }
h2, h3 { font: inherit; margin: 0; }
h2 { flex: 1; color: #222; }
.dockhead span, .dockhead button { font-size: 10px; }
.dockbody { flex: 1; display: flex; min-height: 0; }
.panel { flex: 1; padding: 4px 2px 0 1px; border-right: 1px solid #48b5c9; }
.modes { display: flex; gap: 4px; }
.modes button { width: 16px; height: 16px; }
h3 { font-weight: 700; margin: 9px 0; font-size: 8px; }
.form { display: grid; grid-template-columns: 36px 16px 1fr; align-items: center; row-gap: 4px; column-gap: 2px; }
.anchor { grid-row: 1 / 3; width: 22px; height: 22px; margin-left: 7px; fill: none; stroke: #333; stroke-width: .8; }
.form > label:not(.check) { text-align: right; padding-right: 2px; }
.spin { display: flex; width: 54px; height: 16px; border: 1px solid #b5b5b5; background: #fff; }
.spin input { width: 41px; flex: 1; min-width: 0; padding-left: 2px; }
.spin span { display: flex; flex-direction: column; align-items: center; justify-content: space-around; width: 12px; border-left: 1px solid #bbb; background: #eee; }
.form .check { grid-column: 3; display: flex; align-items: center; gap: 2px; height: 10px; }
.check input { appearance: none; display: grid; place-items: center; width: 9px; height: 9px; border: 1px solid #888; background: #fff; }
.check input:checked::before { content: ""; width: 3px; height: 5px; border: solid #222; border-width: 0 1px 1px 0; transform: rotate(45deg); }
.form .copies { grid-column: 1 / 3; }
.copies, .spin.last { margin-top: 3px; }
.apply { width: 100%; height: 16px; margin-top: 13px; border: 1px solid #48b5c9; background: #e8eeeb; }
.docktabs { width: 14px; background: #e9e9e9; }
.docktabs button { writing-mode: vertical-rl; justify-content: flex-start; gap: 4px; width: 12px; background: #d7d7d7; padding-top: 2px; }
.docktabs .tab-a { height: 77px; }
.docktabs .tab-b { height: 96px; }
.docktabs .tab-c { height: 61px; }
.docktabs .tab-d { height: 76px; background: #d5e4fb; padding-top: 4px; }
.docktabs .plus { background: none; color: #999; font-size: 12px; }

.palette { width: 13px; display: flex; flex-direction: column; align-items: center; gap: 4px; padding: 2px 0 4px; background: #f2f2f2; color: #999; flex: none; }
.palette span { font-size: 10px; }
.palette .chev { width: 7px; height: 6px; fill: none; stroke: #aaa; stroke-width: 2; }
.colors { flex: 1; min-height: 0; width: 12px; display: flex; flex-direction: column; }
.colors button { flex: 1; min-height: 0; border: 1px solid #6668; border-width: 0 1px 1px; }
.colors .none { border-width: 1px; }
.colors .picked { border: 1px solid #333; }

.status { display: grid; grid-template-columns: 24px 620px 312px 136px 1fr 24px; align-items: center; height: 25px; border-top: 1px solid #d5d5d5; background: #f3f3f3; flex: none; white-space: nowrap; }
.status .flyout { justify-self: center; width: 14px; height: 14px; }
.filled, .outline { display: flex; align-items: center; gap: 3px; }
.box { width: 14px; height: 14px; flex: none; margin-left: -3px; }
.black { background: #1c1c1c; }
.proof { border-left: 1px solid #ddd; padding-left: 5px; }
.taskbar { display: flex; justify-content: space-between; height: 27px; background: #1c1c1c; color: #eee; flex: none; }
.apps { display: grid; grid-template-columns: repeat(11, 1fr); width: 360px; }
.apps .ic { width: 16px; height: 16px; }
.apps .windows .ic, .apps .search .ic { width: 12px; height: 12px; }
.apps .obs, .apps .corel { border-bottom: 1px solid #e6a5b6; }
.apps .corel { background: #505050; }
time { text-align: right; line-height: 12px; padding: 2px 4px 0 0; }
</style>
